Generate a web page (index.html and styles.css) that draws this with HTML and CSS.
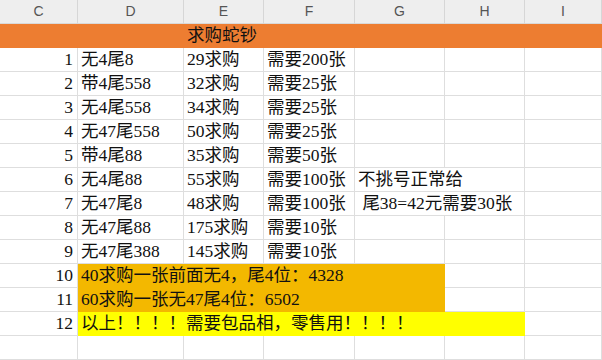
FILE: index.html
```html
<!DOCTYPE html>
<html lang="zh-CN">
<head>
<meta charset="utf-8">
<link rel="stylesheet" href="styles.css">
</head>
<body>
<div class="sheet">
  <div class="hd">C</div><div class="hd">D</div><div class="hd">E</div><div class="hd">F</div><div class="hd">G</div><div class="hd">H</div><div class="hd">I</div>

  <div class="c orange"></div><div class="c orange"></div><div class="c orange">求购蛇钞</div><div class="c orange"></div><div class="c orange"></div><div class="c orange"></div><div class="c orange"></div>

  <div class="c num">1</div><div class="c">无4尾8</div><div class="c">29求购</div><div class="c">需要200张</div><div class="c"></div><div class="c"></div><div class="c"></div>
  <div class="c num">2</div><div class="c">带4尾558</div><div class="c">32求购</div><div class="c">需要25张</div><div class="c"></div><div class="c"></div><div class="c"></div>
  <div class="c num">3</div><div class="c">无4尾558</div><div class="c">34求购</div><div class="c">需要25张</div><div class="c"></div><div class="c"></div><div class="c"></div>
  <div class="c num">4</div><div class="c">无47尾558</div><div class="c">50求购</div><div class="c">需要25张</div><div class="c"></div><div class="c"></div><div class="c"></div>
  <div class="c num">5</div><div class="c">带4尾88</div><div class="c">35求购</div><div class="c">需要50张</div><div class="c"></div><div class="c"></div><div class="c"></div>
  <div class="c num">6</div><div class="c">无4尾88</div><div class="c">55求购</div><div class="c">需要100张</div><div class="c span2">不挑号正常给</div><div class="c"></div>
  <div class="c num">7</div><div class="c">无47尾8</div><div class="c">48求购</div><div class="c">需要100张</div><div class="c span2 pre"> 尾38=42元需要30张</div><div class="c"></div>
  <div class="c num">8</div><div class="c">无47尾88</div><div class="c">175求购</div><div class="c">需要10张</div><div class="c"></div><div class="c"></div><div class="c"></div>
  <div class="c num">9</div><div class="c">无47尾388</div><div class="c">145求购</div><div class="c">需要10张</div><div class="c"></div><div class="c"></div><div class="c"></div>
  <div class="c num">10</div><div class="c gold span4">40求购一张前面无4，尾4位：4328</div><div class="c"></div><div class="c"></div>
  <div class="c num">11</div><div class="c gold span4">60求购一张无47尾4位：6502</div><div class="c"></div><div class="c"></div>
  <div class="c num">12</div><div class="c yellow span5">以上！！！！需要包品相，零售用！！！！</div><div class="c"></div>
  <div class="c"></div><div class="c"></div><div class="c"></div><div class="c"></div><div class="c"></div><div class="c"></div><div class="c"></div>
</div>
</body>
</html>
```
FILE: styles.css
```css
html, body {
  margin: 0;
  padding: 0;
  background: #ffffff;
}

.sheet {
  display: grid;
  grid-template-columns: 78px 106px 80px 91px 90px 80px 1fr;
  grid-auto-rows: 24px;
  width: 602px;
  height: 360px;
  overflow: hidden;
}

.hd {
  box-sizing: border-box;
  background: #eeeeee;
  border-right: 1px solid #d6d6d6;
  border-bottom: 1px solid #d9d9d9;
  color: #555555;
  font-family: "Liberation Sans", "Noto Sans", sans-serif;
  font-size: 14px;
  line-height: 23px;
  text-align: center;
}

.c {
  box-sizing: border-box;
  border-right: 1px solid #dedede;
  border-bottom: 1px solid #dedede;
  padding: 0 3px;
  font-family: "Liberation Serif", "Noto Sans CJK SC", serif;
  font-size: 17.5px;
  line-height: 23px;
  color: #111111;
  white-space: nowrap;
  overflow: visible;
}

.num {
  text-align: right;
  padding-right: 4px;
}

.pre {
  white-space: pre;
}

.span2 { grid-column: span 2; }
.span4 { grid-column: span 4; }
.span5 { grid-column: span 5; }

.orange {
  background: #ed7d31;
  border-color: #ed7d31;
}

.gold {
  background: #f3b800;
  border-color: #f3b800;
}

.yellow {
  background: #ffff00;
  border-color: #ffff00;
}
```
